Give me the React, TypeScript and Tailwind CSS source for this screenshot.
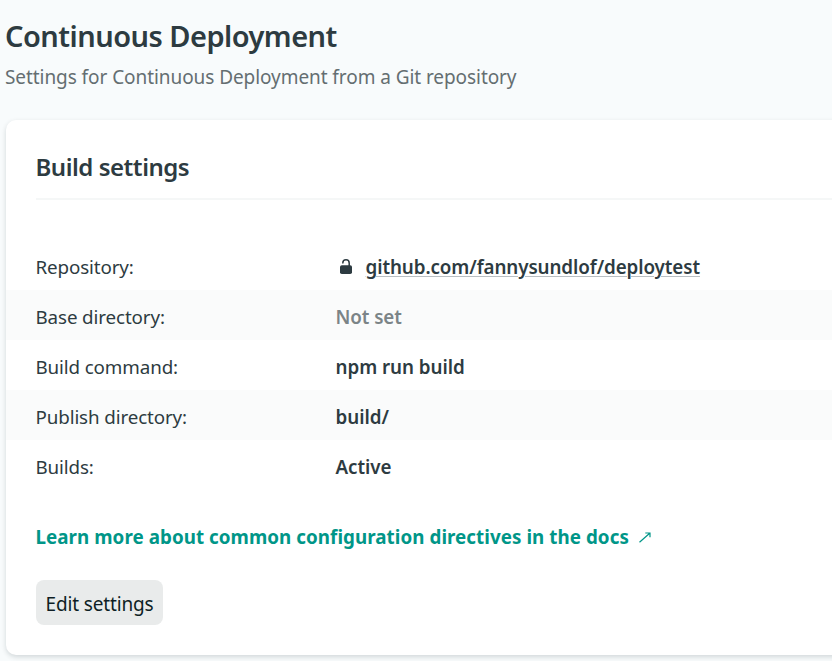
import React from "react";

const rows = [
  { label: "Base directory:", value: "Not set", muted: true },
  { label: "Build command:", value: "npm run build" },
  { label: "Publish directory:", value: "build/" },
  { label: "Builds:", value: "Active" },
];

function LockIcon() {
  return (
    <svg className="mr-[14px] h-[15px] w-[12px] shrink-0 -translate-y-px" viewBox="0 0 12 15" fill="none" aria-hidden="true">
      <path d="M2.8 4.4V4a3.2 3.2 0 0 1 6.4 0V7" stroke="currentColor" strokeWidth="1.5" />
      <rect y="6.2" width="12" height="8.8" rx="1.8" fill="currentColor" />
    </svg>
  );
}

function ArrowIcon() {
  return (
    <svg className="mt-px h-[11px] w-[12px]" viewBox="0 0 12 11" fill="none" aria-hidden="true">
      <path d="M.5 10.3 11 1M6.3 1H11V5.2" stroke="currentColor" strokeWidth="1.2" />
    </svg>
  );
}

export default function App() {
  return (
    <main className="h-[661px] w-[832px] overflow-hidden bg-[#f8fbfc] pl-[6px] pt-[17px] font-['Noto_Sans','Open_Sans',sans-serif] text-[#2d3b41]">
      <h1 className="-ml-px h-10 whitespace-nowrap text-[29px] font-semibold leading-[38px] tracking-[-0.53px]">
        Continuous Deployment
      </h1>
      <p className="-ml-px h-10 whitespace-nowrap text-[19px] leading-10 tracking-[-0.07px] text-[#646e71]">
        Settings for Continuous Deployment from a Git repository
      </p>
      <section className="mt-[23px] h-[535px] w-[900px] rounded-[10px] bg-white shadow-[0_2px_5px_rgba(14,30,37,0.16)]">
        <h2 className="ml-[30px] h-[80px] border-b-2 border-[#f5f7f7] pt-[27px] text-[24px] font-semibold leading-[40px] tracking-[-0.47px]">
          <span className="-ml-[0.5px]">Build settings</span>
        </h2>
        <dl className="pt-10 text-[18.8px] leading-[54px] tracking-[-0.12px]">
          <div className="flex h-[50px] px-[30px]">
            <dt className="-ml-[0.5px] w-[300px]">Repository:</dt>
            <dd className="flex h-[54px] items-center pl-1 font-semibold tracking-[-0.09px]">
              <LockIcon />
              <a className="underline decoration-[#b9bfc3] decoration-[1.3px] underline-offset-[1.5px]">
                github.com/fannysundlof/deploytest
              </a>
            </dd>
          </div>
          {rows.map((row) => (
            <div key={row.label} className="flex h-[50px] px-[30px] odd:bg-white even:bg-[#fafbfb]">
              <dt className="-ml-[0.5px] w-[300px]">{row.label}</dt>
              <dd className={row.muted ? "font-semibold tracking-[-0.09px] text-[#7b8487]" : "font-semibold tracking-[-0.05px]"}>
                {row.value}
              </dd>
            </div>
          ))}
        </dl>
        <a className="ml-[29.5px] mt-[27px] flex h-10 w-fit items-center whitespace-nowrap text-[18.8px] font-bold tracking-[0.05px] text-[#009688]">
          <span className="w-[603px]">Learn more about common configuration directives in the docs</span>
          <ArrowIcon />
        </a>
        <button className="ml-[30px] mt-[23px] flex h-[45px] w-[127px] items-center justify-center rounded-lg bg-[#e9ebeb] pt-[3px] text-[19px] tracking-[-0.15px] text-[#0e1e25]">
          Edit settings
        </button>
      </section>
    </main>
  );
}
